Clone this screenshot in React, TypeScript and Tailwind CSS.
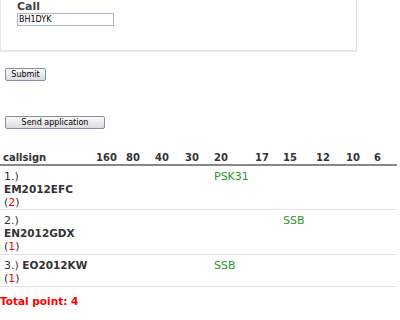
import React from "react";

const cols = "grid grid-cols-[93px_30px_29px_30px_29px_41px_28px_33px_30px_28px_26px]";

function Row({ idx, call, pts, inline, cells, h }: { idx: string; call: string; pts: string; inline?: boolean; cells: Record<number, string>; h: string }) {
  return (
    <div className={`${cols} border-b border-[#e3e3e3] pt-[4px] ${h}`}>
      <div className="pl-[4px] leading-[13px]">
        {inline ? (
          <div>
            {idx} <b className="text-[10.5px]">{call}</b>
          </div>
        ) : (
          <>
            <div>{idx}</div>
            <div className="font-bold text-[10.5px]">{call}</div>
          </>
        )}
        <div>
          (<span className="text-[#ff0000]">{pts}</span>)
        </div>
      </div>
      {Array.from({ length: 10 }).map((_, i) => (
        <div key={i} className="pl-[3px] leading-[13px] text-[#2a9a2a]">
          {cells[i] || ""}
        </div>
      ))}
    </div>
  );
}

export default function App() {
  const heads = ["160", "80", "40", "30", "20", "17", "15", "12", "10", "6"];
  return (
    <div className="w-[400px] h-[320px] overflow-hidden bg-white text-[#333] text-[11px] font-['DejaVu_Sans',sans-serif]">
      <div className="w-[357px] h-[52px] border-l border-r border-b-2 border-l-[#e8e8e8] border-r-[#dcdcdc] border-b-[#e6e6e6] pl-[16px] pt-[1px]">
        <div className="font-bold text-[11px] leading-[12px] text-[#444]">Call</div>
        <input
          readOnly
          value="BH1DYK"
          className="block w-[97px] h-[13px] border border-[#a9b8c9] px-[1px] text-[8px] leading-[11px] text-black outline-none font-['DejaVu_Sans',sans-serif]"
        />
      </div>
      <div className="pl-[5px] pt-[16px]">
        <button className="block w-[41px] h-[13px] border border-[#7e8fa6] rounded-[2px] bg-gradient-to-b from-[#fafafa] to-[#dcdcdc] text-[8px] leading-[11px] text-black font-['DejaVu_Sans',sans-serif]">
          Submit
        </button>
        <button className="block mt-[35px] w-[100px] h-[13px] border border-[#7e8fa6] rounded-[2px] bg-gradient-to-b from-[#fafafa] to-[#dcdcdc] text-[8px] leading-[11px] text-black font-['DejaVu_Sans',sans-serif]">
          Send application
        </button>
      </div>
      <div className="w-[397px] mt-[19px]">
        <div className={`${cols} border-b-2 border-[#888] h-[18px] pt-[3px] font-bold text-[10px] leading-[13px]`}>
          <div className="pl-[3px]">callsign</div>
          {heads.map((h) => (
            <div key={h} className="pl-[3px]">
              {h}
            </div>
          ))}
        </div>
        <Row idx="1.)" call="EM2012EFC" pts="2" cells={{ 4: "PSK31" }} h="h-[44px]" />
        <Row idx="2.)" call="EN2012GDX" pts="1" cells={{ 6: "SSB" }} h="h-[45px]" />
        <Row idx="3.)" call="EO2012KW" pts="1" inline cells={{ 4: "SSB" }} h="h-[32px]" />
      </div>
      <div className="mt-[8px] font-bold text-[10.5px] leading-[13px] text-[#ff0000]">Total point: 4</div>
      <div className="mt-[11px] pl-[3px] leading-[14px] text-[#333]">
        The applications will be checked and the awards will be sent by the manager.
      </div>
    </div>
  );
}
